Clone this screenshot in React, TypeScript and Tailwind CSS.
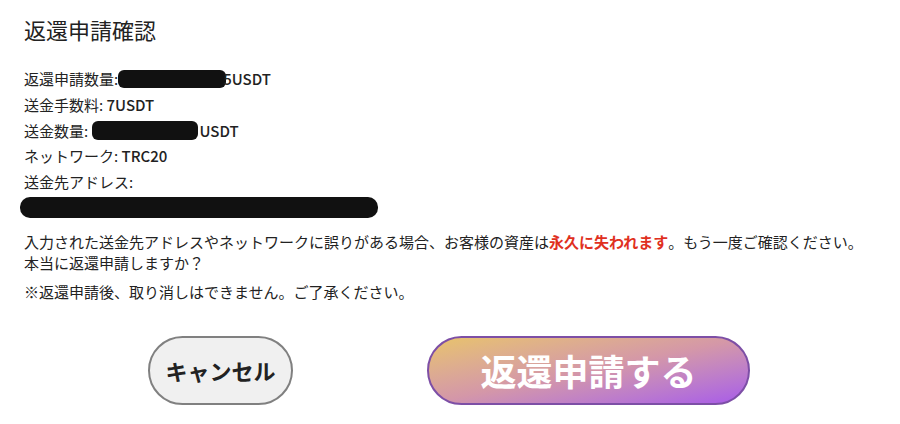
import React from 'react';

const font = { fontFamily: '"Noto Sans CJK JP", "Noto Sans", sans-serif' };

function Redacted({ className }: { className: string }) {
  return <span className={`inline-block rounded-[6px] bg-[#111] align-middle ${className}`} />;
}

export default function App() {
  return (
    <div className="h-[424px] w-[900px] overflow-hidden bg-white text-[#222]" style={font}>
      <div className="px-6 pt-[13px]">
        <h2 className="text-[22px] leading-[32px] font-normal text-[#222]">返還申請確認</h2>

        <div className="mt-[21px] text-[15px] leading-[25.75px]">
          <div className="flex items-center">
            <span>返還申請数量:</span>
            <Redacted className="h-[18px] w-[108px] -mr-[3px]" />
            <span className="font-medium">5USDT</span>
          </div>
          <div>
            送金手数料: <span className="font-medium">7USDT</span>
          </div>
          <div className="flex items-center">
            <span>送金数量:&nbsp;</span>
            <Redacted className="h-[19px] w-[106px]" />
            <span className="ml-[2px] font-medium">USDT</span>
          </div>
          <div>
            ネットワーク: <span className="font-medium">TRC20</span>
          </div>
          <div>送金先アドレス:</div>
          <div className="-ml-[4px] flex h-[26px] items-center">
            <Redacted className="h-[21px] w-[358px] rounded-[10px]" />
          </div>
        </div>

        <p className="mt-[10px] text-[15px] leading-[21px]">
          入力された送金先アドレスやネットワークに誤りがある場合、お客様の資産は
          <span className="font-bold text-[#e0301e]">永久に失われます</span>
          。もう一度ご確認ください。
          <br />
          本当に返還申請しますか？
        </p>
        <p className="mt-[9px] text-[15px] leading-[20px]">※返還申請後、取り消しはできません。ご了承ください。</p>
      </div>

      <div className="mt-[34px] flex justify-center gap-[134px] pr-[2px]">
        <button className="h-[69px] w-[145px] rounded-full border-2 border-[#808080] bg-[#f0f0f0] text-[22px] font-bold text-[#222]">
          キャンセル
        </button>
        <button className="h-[69px] w-[323px] rounded-full border-2 border-[#7d4fa6] bg-gradient-to-br from-[#e8c36a] via-[#d497a8] to-[#a95ae8] text-[36px] font-bold text-white">
          返還申請する
        </button>
      </div>
    </div>
  );
}
